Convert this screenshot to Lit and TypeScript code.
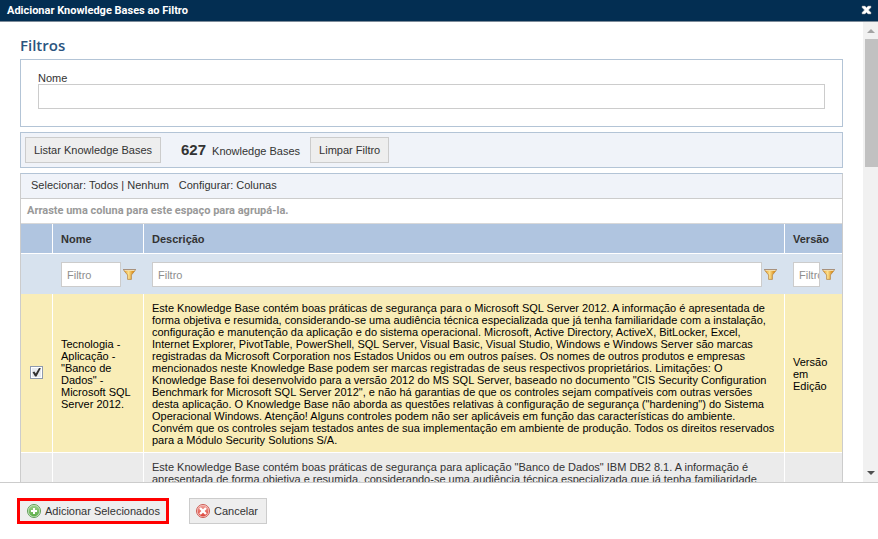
import { LitElement, html, css } from "lit";
import { customElement, property, state } from "lit/decorators.js";

@customElement("funnel-icon")
class FunnelIcon extends LitElement {
  static styles = css`
    :host { display: block; flex: none; width: 13px; height: 11px; }
    svg { display: block; }
  `;
  render() {
    return html`<svg width="13" height="11" viewBox="0 0 13 11" aria-hidden="true">
      <defs>
        <linearGradient id="g" x1="0" x2="1" y1="0" y2="0">
          <stop offset="0.1" stop-color="#e9a63a" />
          <stop offset="0.42" stop-color="#fbe08c" />
          <stop offset="0.8" stop-color="#dc9222" />
        </linearGradient>
      </defs>
      <path d="M0.8 1.5 L4.6 6 V10.4 H8.4 V6 L12.2 1.5 Z" fill="url(#g)" stroke="#b98a4a" stroke-width="0.8" />
      <path d="M0 0 H13 V1 H0 Z" fill="#a8917c" />
      <path d="M1.5 1.5 H11.5" stroke="#f3dca8" stroke-width="1" />
    </svg>`;
  }
}

@customElement("round-icon")
class RoundIcon extends LitElement {
  @property() kind = "add";
  static styles = css`
    :host { display: block; flex: none; width: 14px; height: 14px; }
    svg { display: block; }
  `;
  render() {
    const add = this.kind === "add";
    return html`<svg width="14" height="14" viewBox="0 0 14 14" aria-hidden="true">
      <defs>
        <linearGradient id="f" x1="0" x2="0" y1="0" y2="1">
          <stop offset="0" stop-color=${add ? "#9ccf8b" : "#f0a098"} />
          <stop offset="1" stop-color=${add ? "#5bad45" : "#dc4238"} />
        </linearGradient>
      </defs>
      <circle cx="7" cy="7" r="6.5" fill=${add ? "#d5ecce" : "#f9d5d1"} stroke=${add ? "#5f9c58" : "#cd5a52"} stroke-width="1" />
      <circle cx="7" cy="7" r="5.4" fill="url(#f)" />
      <path
        d=${add ? "M7 4 V10 M4 7 H10" : "M4 4 L10 10 M10 4 L4 10"}
        stroke="#fff" stroke-width=${add ? "2" : "2.4"} />
    </svg>`;
  }
}

@customElement("app-root")
class AppRoot extends LitElement {
  @state() private rows = [
    {
      checked: true,
      name: `Tecnologia - Aplicação - "Banco de Dados" - Microsoft SQL Server 2012.`,
      text: `Este Knowledge Base contém boas práticas de segurança para o Microsoft SQL Server 2012. A informação é apresentada de forma objetiva e resumida, considerando-se uma audiência técnica especializada que já tenha familiaridade com a instalação, configuração e manutenção da aplicação e do sistema operacional. Microsoft, Active Directory, ActiveX, BitLocker, Excel, Internet Explorer, PivotTable, PowerShell, SQL Server, Visual Basic, Visual Studio, Windows e Windows Server são marcas registradas da Microsoft Corporation nos Estados Unidos ou em outros países. Os nomes de outros produtos e empresas mencionados neste Knowledge Base podem ser marcas registradas de seus respectivos proprietários. Limitações: O Knowledge Base foi desenvolvido para a versão 2012 do MS SQL Server, baseado no documento "CIS Security Configuration Benchmark for Microsoft SQL Server 2012", e não há garantias de que os controles sejam compatíveis com outras versões desta aplicação. O Knowledge Base não aborda as questões relativas à configuração de segurança ("hardening") do Sistema Operacional Windows. Atenção! Alguns controles podem não ser aplicáveis em função das características do ambiente. Convém que os controles sejam testados antes de sua implementação em ambiente de produção. Todos os direitos reservados para a Módulo Security Solutions S/A.`,
      version: "Versão em Edição",
    },
    {
      checked: false,
      name: "",
      text: `Este Knowledge Base contém boas práticas de segurança para aplicação "Banco de Dados" IBM DB2 8.1. A informação é apresentada de forma objetiva e resumida, considerando-se uma audiência técnica especializada que já tenha familiaridade`,
      version: "",
    },
  ];

  static styles = css`
    * { box-sizing: border-box; }
    :host {
      display: flex;
      flex-direction: column;
      height: 100vh;
      background: #fff;
      color: #333;
      font: 11px/12px "Liberation Sans", Arial, sans-serif;
    }
    button, input { font: inherit; color: inherit; margin: 0; border-radius: 0; }
    a { color: inherit; text-decoration: none; }
    .title {
      flex: none;
      display: flex;
      align-items: center;
      justify-content: space-between;
      height: 22px;
      padding: 0 6px 0 7px;
      background: #032e52;
      border-bottom: 1px solid #7d8b99;
      color: #fff;
    }
    .title h1 { margin: 0; font: bold 11px/12px Roboto, Arial, sans-serif; }
    .close { display: block; padding: 0 0 2px; border: 0; background: none; }
    svg { display: block; }
    .body { flex: 1; min-height: 0; display: flex; }
    .content {
      flex: 1;
      min-width: 0;
      overflow-y: auto;
      scrollbar-width: none;
      padding: 15px 20px 0;
    }
    .content h2 {
      margin: 0 0 6px;
      color: #2b547e;
      font: 600 15px/16px "Trebuchet MS", "Open Sans", sans-serif;
    }
    .panel { border: 1px solid #b3c4d6; margin-bottom: 5px; }
    .search { padding: 12px 17px 17px; }
    .search label { display: block; }
    input[type="text"] {
      display: block;
      width: 100%;
      height: 25px;
      padding: 0 0 0 5px;
      border: 1px solid #ccc;
      background: #fff;
      outline: none;
    }
    input::placeholder { color: #8e8e8e; opacity: 1; }
    .list { display: flex; align-items: center; padding: 4px; background: #f0f3f9; }
    .btn {
      display: flex;
      align-items: center;
      gap: 4px;
      height: 26px;
      padding: 0 8px;
      border: 1px solid #ccc;
      background: #eee;
      white-space: nowrap;
    }
    .count { margin: 0 10px 0 20px; display: flex; align-items: baseline; gap: 6px; }
    .count b { font-size: 15px; }
    .tools {
      display: flex;
      gap: 10px;
      padding: 5px 10px;
      height: 24px;
      background: #f0f3f9;
    }
    .grid { border: 1px solid #ccc; border-top-color: #b3c4d6; }
    .group {
      height: 26px;
      padding: 6px;
      border-top: 1px solid #ccc;
      border-bottom: 1px solid #d8d8d8;
      color: #999;
      font: bold 11px/12px Roboto, Arial, sans-serif;
    }
    table { width: 100%; border-spacing: 0; table-layout: fixed; }
    .c-check { width: 31px; }
    .c-name { width: 91px; }
    .c-version { width: 58px; }
    th, td { padding: 8px 6px 6px 8px; text-align: left; border-bottom: 1px solid #fff; }
    .heads th { height: 30px; padding-top: 6px; background: #b0c5e0; }
    .heads th + th, .row td + td { border-left: 1px solid #fff; }
    .filters td { height: 40px; background: #d7e2ee; border-bottom: 0; padding: 8px 7px 7px 9px; }
    .field { display: flex; align-items: center; gap: 2px; }
    .field input { flex: 1; min-width: 0; }
    .row td { background: #ebebeb; }
    .row.on td { background: #f9edb7; color: #000; }
    .row .pick { padding: 0 0 2px; text-align: center; }
    .pick input {
      appearance: none;
      display: inline-grid;
      place-content: center;
      width: 13px;
      height: 13px;
      border: 1px solid #8e9aae;
      background: #e8ebf0;
      box-shadow: inset 0 0 0 1px #fff;
      vertical-align: middle;
    }
    .pick input:checked::before {
      content: "";
      width: 9px;
      height: 9px;
      background: #333;
      clip-path: polygon(6% 50%, 26% 40%, 42% 64%, 78% 2%, 98% 6%, 50% 98%, 34% 98%);
    }
    .bar {
      flex: none;
      width: 15px;
      display: flex;
      flex-direction: column;
      background: #f1f1f1;
    }
    .bar svg { flex: none; }
    .track { flex: 1; padding-left: 2px; }
    .thumb { height: 30%; background: #c1c1c1; }
    .foot {
      flex: none;
      display: flex;
      gap: 20px;
      padding: 15px 17px;
      border-top: 1px solid #ccc;
    }
    .foot .btn { padding: 0 8px 0 6px; }
    .foot .main { border: 3px solid #f00; padding: 0 6px 0 7px; }
  `;

  private toggle(index: number) {
    this.rows = this.rows.map((r, i) => (i === index ? { ...r, checked: !r.checked } : r));
  }

  private filter(label: string) {
    return html`<td><div class="field">
      <input type="text" placeholder="Filtro" aria-label=${label} /><funnel-icon></funnel-icon>
    </div></td>`;
  }

  render() {
    return html`
      <header class="title">
        <h1>Adicionar Knowledge Bases ao Filtro</h1>
        <button class="close" aria-label="Fechar">
          <svg width="11" height="10" viewBox="0 0 11 10">
            <path d="M1 1 H4 L5.5 2.6 L7 1 H10 V2.5 L7.6 5 L10 7.5 V9 H7 L5.5 7.4 L4 9 H1 V7.5 L3.4 5 L1 2.5 Z" fill="#fff" stroke="#8a8f96" stroke-width="0.5" />
          </svg>
        </button>
      </header>
      <div class="body">
        <main class="content">
          <h2>Filtros</h2>
          <div class="panel search">
            <label for="nome">Nome</label>
            <input type="text" id="nome" />
          </div>
          <div class="panel list">
            <button class="btn">Listar Knowledge Bases</button>
            <span class="count"><b>627</b><span>Knowledge Bases</span></span>
            <button class="btn">Limpar Filtro</button>
          </div>
          <div class="grid">
            <div class="tools">
              <span>Selecionar: <a href="#">Todos</a> | <a href="#">Nenhum</a></span>
              <span>Configurar: <a href="#">Colunas</a></span>
            </div>
            <div class="group">Arraste uma coluna para este espaço para agrupá-la.</div>
            <table>
              <colgroup><col class="c-check" /><col class="c-name" /><col /><col class="c-version" /></colgroup>
              <thead>
                <tr class="heads"><th></th><th>Nome</th><th>Descrição</th><th>Versão</th></tr>
                <tr class="filters">
                  <td></td>
                  ${this.filter("Filtrar nome")}${this.filter("Filtrar descrição")}${this.filter("Filtrar versão")}
                </tr>
              </thead>
              <tbody>
                ${this.rows.map((r, i) => html`<tr class="row ${r.checked ? "on" : ""}">
                  <td class="pick">${r.name
                    ? html`<input type="checkbox" aria-label=${r.name} .checked=${r.checked} @change=${() => this.toggle(i)} />`
                    : ""}</td>
                  <td>${r.name}</td>
                  <td>${r.text}</td>
                  <td>${r.version}</td>
                </tr>`)}
              </tbody>
            </table>
          </div>
        </main>
        <div class="bar" aria-hidden="true">
          <svg width="15" height="17" viewBox="0 0 15 17"><path d="M4 11 L8 7 L12 11 Z" fill="#a3a3a3" /></svg>
          <div class="track"><div class="thumb"></div></div>
          <svg width="15" height="17" viewBox="0 0 15 17"><path d="M4 6 L8 10 L12 6 Z" fill="#505050" /></svg>
        </div>
      </div>
      <footer class="foot">
        <button class="btn main"><round-icon kind="add"></round-icon>Adicionar Selecionados</button>
        <button class="btn"><round-icon kind="cancel"></round-icon>Cancelar</button>
      </footer>
    `;
  }
}
